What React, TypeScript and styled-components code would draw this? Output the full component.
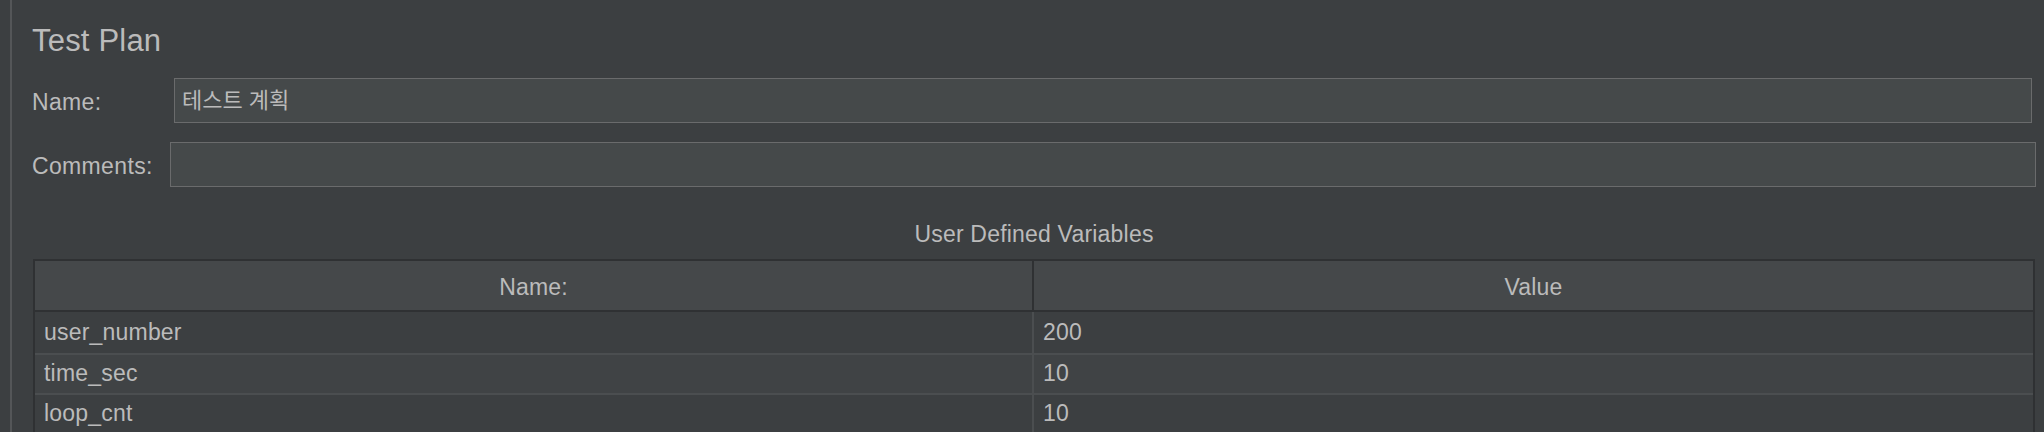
import styled, {createGlobalStyle} from 'styled-components'
import {Fragment} from 'react'

const GlobalStyle = createGlobalStyle`
    html, body {
        margin: 0;
        padding: 0;
        background: #3c3f41;
    }
    body {
        font-family: 'Liberation Sans', 'Noto Sans CJK KR', Arial, sans-serif;
        color: #bbbbbb;
    }
`

const Page = styled.div`
    width: 2044px;
    height: 432px;
    overflow: hidden;
    background: #3c3f41;
    padding-left: 10px;
    box-sizing: border-box;
    display: flex;
`

const Panel = styled.div`
    flex: 1;
    border-left: 2px solid #545658;
    padding: 25px 8px 0 20px;
    display: flex;
    flex-direction: column;
`

const Title = styled.div`
    font-size: 31px;
    line-height: 32px;
    height: 32px;
    color: #bbbbbb;
    letter-spacing: 0.2px;
    margin-bottom: 21px;
`

const FieldRow = styled.div<{$labelWidth: number; $right: number}>`
    display: grid;
    grid-template-columns: ${(p) => p.$labelWidth}px 1fr;
    align-items: center;
    margin-right: ${(p) => p.$right}px;
    margin-bottom: 19px;
`

const Label = styled.label`
    font-size: 23px;
    line-height: 23px;
    letter-spacing: 0.35px;
    padding-top: 3px;
    color: #bbbbbb;
`

const Input = styled.div`
    height: 45px;
    box-sizing: border-box;
    border: 1.5px solid #6a6b6c;
    background: #45494a;
    font-size: 22px;
    line-height: 23px;
    display: flex;
    align-items: center;
    padding: 0 7px;
    color: #bbbbbb;
`

const TableCaption = styled.div`
    font-size: 23px;
    line-height: 23px;
    letter-spacing: 0.2px;
    text-align: center;
    margin: 17px 1px 13px 1px;
`

const Table = styled.div`
    margin: 0 1px;
    border: 2px solid #2f3133;
    border-bottom: none;
    display: grid;
    grid-template-columns: 1fr 1fr;
    font-size: 23px;
    letter-spacing: 0.2px;
`

const HeaderCell = styled.div<{$last?: boolean}>`
    height: 51px;
    box-sizing: border-box;
    background: #45484a;
    border-bottom: 2px solid #2f3133;
    border-right: ${(p) => (p.$last ? 'none' : '2px solid #2f3133')};
    display: flex;
    align-items: center;
    justify-content: center;
    padding-top: 3px;
`

const Cell = styled.div<{$alt?: boolean; $first?: boolean; $last?: boolean}>`
    height: ${(p) => (p.$first ? 41 : 40)}px;
    box-sizing: border-box;
    background: ${(p) => (p.$alt ? '#404345' : '#3c3f41')};
    border-top: ${(p) => (p.$first ? 'none' : '2px solid #4b4e50')};
    border-right: ${(p) => (p.$last ? 'none' : '2px solid #4b4e50')};
    display: flex;
    align-items: center;
    padding: 0 9px 1px 9px;
`

const rows = [
    {name: 'user_number', value: '200'},
    {name: 'time_sec', value: '10'},
    {name: 'loop_cnt', value: '10'},
]

export default function App() {
    return (
        <>
            <GlobalStyle />
            <Page>
                <Panel>
                    <Title>Test Plan</Title>
                    <FieldRow $labelWidth={142} $right={4}>
                        <Label>Name:</Label>
                        <Input>테스트 계획</Input>
                    </FieldRow>
                    <FieldRow $labelWidth={138} $right={0}>
                        <Label>Comments:</Label>
                        <Input />
                    </FieldRow>
                    <TableCaption>User Defined Variables</TableCaption>
                    <Table>
                        <HeaderCell>Name:</HeaderCell>
                        <HeaderCell $last>Value</HeaderCell>
                        {rows.map((r, i) => (
                            <Fragment key={r.name}>
                                <Cell $alt={i % 2 === 1} $first={i === 0}>
                                    {r.name}
                                </Cell>
                                <Cell $alt={i % 2 === 1} $first={i === 0} $last>
                                    {r.value}
                                </Cell>
                            </Fragment>
                        ))}
                    </Table>
                </Panel>
            </Page>
        </>
    )
}
